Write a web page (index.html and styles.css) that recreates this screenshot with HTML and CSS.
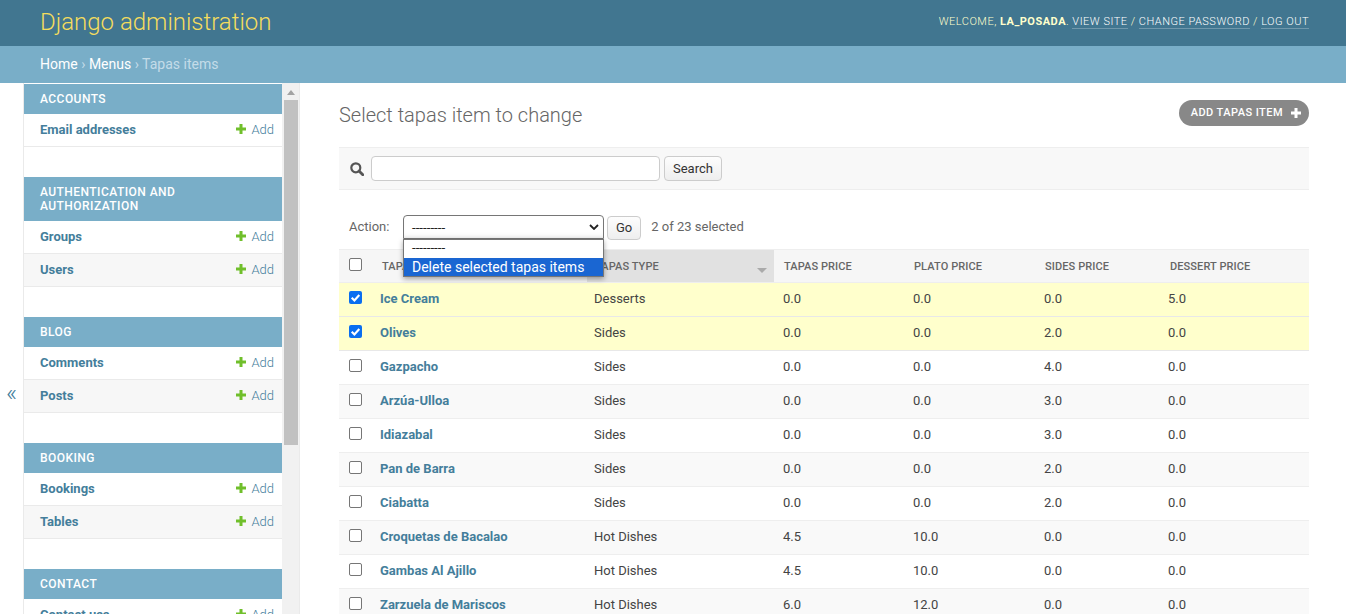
FILE: index.html
```html
<!DOCTYPE html>
<html lang="en">
<head>
    <meta charset="UTF-8">
    <title>Select tapas item to change | Django site admin</title>
    <link rel="stylesheet" href="styles.css">
</head>
<body>
    <div id="header">
        <div class="branding">Django administration</div>
        <div class="user-tools">
            Welcome, <strong>la_posada</strong>.
            <a href="#">View site</a> / <a href="#">Change password</a> / <a href="#">Log out</a>
        </div>
    </div>
    <div class="breadcrumbs">
        <a href="#">Home</a> <span class="sep">›</span> <a href="#">Menus</a> <span class="sep">›</span> Tapas items
    </div>

    <div class="main">
        <button class="nav-toggle" type="button">«</button>

        <div class="nav-wrap">
            <div class="nav-list">
                <div class="module">
                    <div class="caption">Accounts</div>
                    <div class="model"><a class="model-name" href="#">Email addresses</a><a class="addlink" href="#"><svg viewBox="0 0 10 10"><path d="M3.5 0h3v3.5H10v3H6.500V10h-3V6.500H0v-3h3.500z"/></svg>Add</a></div>
                </div>
                <div class="module">
                    <div class="caption">Authentication and Authorization</div>
                    <div class="model"><a class="model-name" href="#">Groups</a><a class="addlink" href="#"><svg viewBox="0 0 10 10"><path d="M3.5 0h3v3.5H10v3H6.500V10h-3V6.500H0v-3h3.500z"/></svg>Add</a></div>
                    <div class="model alt"><a class="model-name" href="#">Users</a><a class="addlink" href="#"><svg viewBox="0 0 10 10"><path d="M3.5 0h3v3.5H10v3H6.500V10h-3V6.500H0v-3h3.500z"/></svg>Add</a></div>
                </div>
                <div class="module">
                    <div class="caption">Blog</div>
                    <div class="model"><a class="model-name" href="#">Comments</a><a class="addlink" href="#"><svg viewBox="0 0 10 10"><path d="M3.5 0h3v3.5H10v3H6.500V10h-3V6.500H0v-3h3.500z"/></svg>Add</a></div>
                    <div class="model alt"><a class="model-name" href="#">Posts</a><a class="addlink" href="#"><svg viewBox="0 0 10 10"><path d="M3.5 0h3v3.5H10v3H6.500V10h-3V6.500H0v-3h3.500z"/></svg>Add</a></div>
                </div>
                <div class="module">
                    <div class="caption">Booking</div>
                    <div class="model"><a class="model-name" href="#">Bookings</a><a class="addlink" href="#"><svg viewBox="0 0 10 10"><path d="M3.5 0h3v3.5H10v3H6.500V10h-3V6.500H0v-3h3.500z"/></svg>Add</a></div>
                    <div class="model alt"><a class="model-name" href="#">Tables</a><a class="addlink" href="#"><svg viewBox="0 0 10 10"><path d="M3.5 0h3v3.5H10v3H6.500V10h-3V6.500H0v-3h3.500z"/></svg>Add</a></div>
                </div>
                <div class="module">
                    <div class="caption">Contact</div>
                    <div class="model"><a class="model-name" href="#">Contact uss</a><a class="addlink" href="#"><svg viewBox="0 0 10 10"><path d="M3.5 0h3v3.5H10v3H6.500V10h-3V6.500H0v-3h3.500z"/></svg>Add</a></div>
                </div>
            </div>
            <div class="scrollbar">
                <div class="scroll-up"></div>
                <div class="scroll-thumb"></div>
            </div>
        </div>

        <div class="content">
            <div class="title-row">
                <h1>Select tapas item to change</h1>
                <a class="add-btn" href="#">Add tapas item<svg viewBox="0 0 10 10"><path d="M3.5 0h3v3.5H10v3H6.500V10h-3V6.500H0v-3h3.500z"/></svg></a>
            </div>

            <div class="toolbar">
                <svg class="search-icon" viewBox="0 0 14 14"><circle cx="5.800" cy="5.800" r="4.500" fill="none" stroke="#555" stroke-width="2.200"/><path d="M9 9l3.800 3.800" stroke="#555" stroke-width="2.800" stroke-linecap="round"/></svg>
                <input class="search-input" type="text">
                <button class="btn search-btn" type="button">Search</button>
            </div>

            <div class="actions">
                <label>Action:</label>
                <div class="select-wrap">
                    <div class="select-box">
                        <span>---------</span>
                        <svg viewBox="0 0 10 6"><path d="M1 1l4 4 4-4" fill="none" stroke="#222" stroke-width="1.800"/></svg>
                    </div>
                    <div class="select-menu">
                        <div class="option">---------</div>
                        <div class="option selected">Delete selected tapas items</div>
                    </div>
                </div>
                <button class="btn go-btn" type="button">Go</button>
                <span class="counter">2 of 23 selected</span>
            </div>

            <table class="results">
                <thead>
                    <tr>
                        <th class="col-check"><span class="box"></span></th>
                        <th class="col-name">Tapas item</th>
                        <th class="col-type sorted">Tapas type<span class="sort-arrow"></span></th>
                        <th class="col-tapas">Tapas price</th>
                        <th class="col-plato">Plato price</th>
                        <th class="col-sides">Sides price</th>
                        <th>Dessert price</th>
                    </tr>
                </thead>
                <tbody>
                    <tr class="selected-row"><td><span class="box checked"><svg viewBox="0 0 12 12"><path d="M2.500 6.200l2.500 2.500 4.500-5" fill="none" stroke="#fff" stroke-width="2"/></svg></span></td><td class="name"><a href="#">Ice Cream</a></td><td>Desserts</td><td>0.0</td><td>0.0</td><td>0.0</td><td>5.0</td></tr>
                    <tr class="selected-row"><td><span class="box checked"><svg viewBox="0 0 12 12"><path d="M2.500 6.200l2.500 2.500 4.500-5" fill="none" stroke="#fff" stroke-width="2"/></svg></span></td><td class="name"><a href="#">Olives</a></td><td>Sides</td><td>0.0</td><td>0.0</td><td>2.0</td><td>0.0</td></tr>
                    <tr><td><span class="box"></span></td><td class="name"><a href="#">Gazpacho</a></td><td>Sides</td><td>0.0</td><td>0.0</td><td>4.0</td><td>0.0</td></tr>
                    <tr class="alt"><td><span class="box"></span></td><td class="name"><a href="#">Arzúa-Ulloa</a></td><td>Sides</td><td>0.0</td><td>0.0</td><td>3.0</td><td>0.0</td></tr>
                    <tr><td><span class="box"></span></td><td class="name"><a href="#">Idiazabal</a></td><td>Sides</td><td>0.0</td><td>0.0</td><td>3.0</td><td>0.0</td></tr>
                    <tr class="alt"><td><span class="box"></span></td><td class="name"><a href="#">Pan de Barra</a></td><td>Sides</td><td>0.0</td><td>0.0</td><td>2.0</td><td>0.0</td></tr>
                    <tr><td><span class="box"></span></td><td class="name"><a href="#">Ciabatta</a></td><td>Sides</td><td>0.0</td><td>0.0</td><td>2.0</td><td>0.0</td></tr>
                    <tr class="alt"><td><span class="box"></span></td><td class="name"><a href="#">Croquetas de Bacalao</a></td><td>Hot Dishes</td><td>4.5</td><td>10.0</td><td>0.0</td><td>0.0</td></tr>
                    <tr><td><span class="box"></span></td><td class="name"><a href="#">Gambas Al Ajillo</a></td><td>Hot Dishes</td><td>4.5</td><td>10.0</td><td>0.0</td><td>0.0</td></tr>
                    <tr class="alt"><td><span class="box"></span></td><td class="name"><a href="#">Zarzuela de Mariscos</a></td><td>Hot Dishes</td><td>6.0</td><td>12.0</td><td>0.0</td><td>0.0</td></tr>
                </tbody>
            </table>
        </div>
    </div>
</body>
</html>
```

FILE: styles.css
```css
* {
    box-sizing: border-box;
}

html,
body {
    height: 100%;
}

body {
    margin: 0;
    overflow: hidden;
    display: flex;
    flex-direction: column;
    font-family: Roboto, "Liberation Sans", sans-serif;
    font-size: 13px;
    color: #333;
    background-color: white;
}

a {
    text-decoration: none;
}

/* header */
#header {
    height: 46px;
    flex: none;
    display: flex;
    justify-content: space-between;
    align-items: center;
    padding: 0 37px 2px 40px;
    background-color: #417690;
    color: #ffc;
}

.branding {
    font-size: 24px;
    font-weight: 300;
    color: #f5dd5d;
}

.user-tools {
    margin-bottom: 2px;
    font-size: 11px;
    letter-spacing: 0.5px;
    text-transform: uppercase;
    font-weight: 300;
}

.user-tools strong {
    font-weight: 700;
}

.user-tools a {
    color: white;
    border-bottom: 1px solid rgba(255, 255, 255, 0.25);
}

.breadcrumbs {
    height: 37px;
    flex: none;
    padding: 0 40px;
    background-color: #79aec8;
    font-size: 14px;
    line-height: 36px;
    color: #c4dce8;
}

.breadcrumbs a {
    color: white;
}

.sep {
    font-size: 14px;
}

/* main area */
.main {
    flex: 1;
    min-height: 0;
    display: flex;
}

.nav-toggle {
    width: 23px;
    flex: none;
    padding: 88px 0 0;
    border: none;
    background: white;
    color: #447e9b;
    font-family: inherit;
    font-size: 24px;
    font-weight: 300;
}

.nav-wrap {
    width: 277px;
    flex: none;
    display: flex;
    border-left: 1px solid #eaeaea;
    border-right: 1px solid #eaeaea;
    overflow: hidden;
    padding-top: 1px;
}

.nav-list {
    width: 258px;
    flex: none;
}

.module {
    margin-bottom: 30px;
}

.caption {
    padding: 8px 16px;
    background-color: #79aec8;
    color: white;
    font-size: 12px;
    font-weight: 500;
    line-height: 14px;
    letter-spacing: 0.45px;
    text-transform: uppercase;
}

.model {
    height: 33px;
    display: flex;
    justify-content: space-between;
    align-items: center;
    padding: 0 8px 2px 16px;
    border-bottom: 1px solid #eaeaea;
    background-color: white;
}

.model.alt {
    background-color: #f7f7f7;
}

.model-name {
    font-weight: 700;
    color: #447e9b;
}

.addlink {
    display: flex;
    align-items: center;
    gap: 5px;
    color: #447e9b;
    font-weight: 300;
}

.addlink svg {
    width: 10px;
    height: 10px;
    fill: #70bf2b;
}

.scrollbar {
    width: 17px;
    flex: none;
    margin-top: -1px;
    padding: 0 1px;
    background-color: #f1f1f1;
}

.scroll-up {
    width: 0;
    height: 0;
    margin: 7px auto 5px;
    border-left: 4px solid transparent;
    border-right: 4px solid transparent;
    border-bottom: 5px solid #a3a3a3;
}

.scroll-thumb {
    width: 14px;
    height: 345px;
    margin-left: 1px;
    background-color: #c1c1c1;
}

/* content */
.content {
    flex: 1;
    min-width: 0;
    padding: 17px 37px 0 39px;
}

.title-row {
    height: 30px;
    display: flex;
    justify-content: space-between;
    align-items: center;
}

h1 {
    margin: 0;
    font-size: 20px;
    font-weight: 300;
    color: #666;
}

.add-btn {
    height: 26px;
    margin-bottom: 4px;
    display: flex;
    align-items: center;
    gap: 8px;
    padding: 0 8px 2px 12px;
    border-radius: 13px;
    background-color: #888;
    color: white;
    font-size: 11px;
    font-weight: 500;
    letter-spacing: 0.45px;
    text-transform: uppercase;
}

.add-btn svg {
    width: 10px;
    height: 10px;
    margin-top: 2px;
    fill: white;
}

.toolbar {
    height: 43px;
    margin-top: 17px;
    display: flex;
    align-items: center;
    padding-left: 11px;
    background-color: #f8f8f8;
    border-top: 1px solid #eee;
    border-bottom: 1px solid #eee;
}

.search-icon {
    width: 14px;
    height: 14px;
    margin-right: 7px;
}

.search-input {
    width: 289px;
    height: 25px;
    padding: 2px 5px;
    background: white;
    border: 1px solid #ccc;
    border-radius: 4px;
}

.btn {
    height: 25px;
    padding: 0 8px;
    border: 1px solid #ccc;
    border-radius: 4px;
    background: linear-gradient(#fdfdfd, #eee);
    font-family: inherit;
    font-size: 13px;
    color: #333;
}

.search-btn {
    margin-left: 4px;
}

.actions {
    height: 59px;
    display: flex;
    align-items: center;
    padding: 15px 0 0 10px;
    color: #666;
}

.actions label {
    width: 54px;
    margin-bottom: 2px;
}

.select-wrap {
    width: 201px;
    position: relative;
}

.select-box {
    height: 24px;
    display: flex;
    justify-content: space-between;
    align-items: center;
    padding: 0 4px 0 8px;
    border: 1px solid #767676;
    border-radius: 4px 4px 0 0;
    background: white;
    box-shadow: inset 0 -4px 6px -4px rgba(0, 0, 0, 0.12);
    font-size: 13.33px;
    color: #222;
}

.select-box svg {
    width: 10px;
    height: 6px;
}

.select-menu {
    position: absolute;
    top: 24px;
    left: 0;
    right: 0;
    z-index: 5;
    padding-top: 1px;
    border: 1px solid #767676;
    background: white;
    font-size: 13.33px;
    color: #222;
    box-shadow: 0 2px 5px rgba(0, 0, 0, 0.35);
}

.option {
    height: 17px;
    line-height: 14px;
    padding-left: 8px;
}

.option.selected {
    height: 18px;
    line-height: 19px;
    background-color: #1a66d2;
    color: white;
    font-size: 14px;
}

.go-btn {
    margin-left: 3px;
    margin-top: 1px;
    height: 24px;
}

.counter {
    margin-left: 10px;
    margin-bottom: 2px;
}

/* table */
.results {
    width: 970px;
    table-layout: fixed;
    border-collapse: collapse;
    border-top: 1px solid #eee;
}

.results th {
    height: 33px;
    padding: 0 10px;
    background-color: #f6f6f6;
    border-bottom: 1px solid #eee;
    text-align: left;
    font-size: 11px;
    font-weight: 500;
    color: #666;
    letter-spacing: 0.1px;
    text-transform: uppercase;
}

.col-check {
    width: 33px;
}

.col-name {
    width: 215px;
}

.col-type {
    width: 187px;
}

.col-tapas {
    width: 130px;
}

.col-plato {
    width: 131px;
}

.col-sides {
    width: 125px;
}

.results th.sorted {
    position: relative;
    background-color: #e1e1e1;
    padding-left: 8px;
}

.sort-arrow {
    position: absolute;
    right: 7px;
    top: 18px;
    border-left: 5px solid transparent;
    border-right: 5px solid transparent;
    border-top: 5px solid #aaa;
}

.results td {
    height: 34px;
    padding: 0 8px 2px;
    border-bottom: 1px solid #eee;
    color: #444;
}

.results td:nth-child(3) {
    padding-left: 7px;
}

.results td:nth-child(n+4) {
    padding-left: 9px;
}

.results td:last-child {
    padding-left: 8px;
}

.results td:first-child,
.results th:first-child {
    padding: 0 0 4px 10px;
}

.results tr.alt td {
    background-color: #f9f9f9;
}

.results tr.selected-row td {
    background-color: #ffc;
    border-bottom-color: #e8e8e8;
}

.results td.name {
    padding-left: 8px;
}

.name a {
    font-weight: 700;
    color: #447e9b;
}

.box {
    width: 13px;
    height: 13px;
    display: block;
    border: 1px solid #767676;
    border-radius: 2px;
    background: white;
}

.box.checked {
    border: none;
    background-color: #0a6ef0;
}

.box svg {
    display: block;
    width: 13px;
    height: 13px;
}
```
